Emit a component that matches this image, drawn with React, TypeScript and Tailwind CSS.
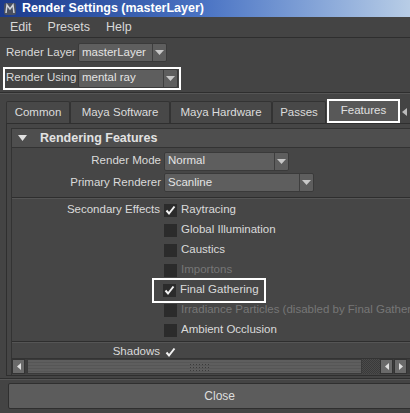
import React from "react";

const Check = () => (
  <svg viewBox="0 0 13 13" className="w-[13px] h-[13px]">
    <path d="M2.5 6.5 L5 9.5 L10.5 2.5" stroke="#f2f2f2" strokeWidth="2" fill="none" />
  </svg>
);

const Box = ({ checked }: { checked?: boolean }) => (
  <div className="w-[13px] h-[13px] bg-[#2b2b2b] flex items-center justify-center shrink-0">
    {checked && <Check />}
  </div>
);

const Arrow = () => (
  <svg viewBox="0 0 9 5" className="w-[9px] h-[5px]">
    <path d="M0 0 L9 0 L4.5 5 Z" fill="#c8c8c8" />
  </svg>
);

const Dropdown = ({ text, w }: { text: string; w: string }) => (
  <div className={`${w} h-[19px] shrink-0 bg-[#5e5e5e] rounded-[2px] border border-[#3a3a3a] flex items-center`}>
    <span className="flex-1 pl-[3px] text-[#e4e4e4] whitespace-nowrap">{text}</span>
    <div className="w-[14px] h-full border-l border-[#3e3e3e] flex items-center justify-center">
      <Arrow />
    </div>
  </div>
);

const effects = [
  { label: "Raytracing", checked: true },
  { label: "Global Illumination" },
  { label: "Caustics" },
  { label: "Importons", disabled: true },
  { label: "Final Gathering", checked: true, boxed: true },
  { label: "Irradiance Particles (disabled by Final Gathering)", disabled: true },
  { label: "Ambient Occlusion" },
];

const tabs = [
  { label: "Common", w: "w-[64px]" },
  { label: "Maya Software", w: "w-[100px]" },
  { label: "Maya Hardware", w: "w-[102px]" },
  { label: "Passes", w: "w-[54px]" },
];

const Sep = ({ cls }: { cls?: string }) => (
  <div className={`h-[2px] shrink-0 border-t border-[#2e2e2e] border-b border-b-[#555] ${cls ?? ""}`} />
);

export default function App() {
  return (
    <div className="w-[410px] h-[413px] bg-[#444444] overflow-hidden flex flex-col font-['Liberation_Sans',Arial,sans-serif] text-[11.5px] text-[#dadada] leading-none">
      {/* title bar */}
      <div className="h-[17px] shrink-0 flex items-center gap-[5px] pl-[3px] bg-gradient-to-r from-[#1b3a8c] via-[#4b74c4] to-[#b8cde6]">
        <svg viewBox="0 0 14 14" className="w-[14px] h-[14px]">
          <rect x="1" y="1" width="12" height="12" rx="2" fill="#4a5060" />
          <path d="M3 11 L4 3 L7 7 L10 3 L11 11" stroke="#d0d4dc" strokeWidth="1.5" fill="none" />
        </svg>
        <span className="text-white font-bold text-[12.5px] whitespace-nowrap">Render Settings (masterLayer)</span>
      </div>

      <div className="flex-1 flex">
        <div className="w-[2px] bg-[#cfcfcf]" />
        <div className="flex-1 flex flex-col">
          {/* menu */}
          <div className="h-[21px] shrink-0 flex items-center gap-[16px] pl-[10px] text-[12.5px] text-[#d8d8d8] border-b border-[#2e2e2e]">
            <span>Edit</span>
            <span>Presets</span>
            <span>Help</span>
          </div>

          <div className="h-[26px] shrink-0 flex items-center pl-[6px] gap-[3px] pt-[3px]">
            <span className="w-[69px] whitespace-nowrap">Render Layer</span>
            <Dropdown text="masterLayer" w="w-[89px]" />
          </div>
          <div className="h-[28px] shrink-0 flex items-center pl-[3px]">
            <div className="h-[23px] w-[178px] border-2 border-white flex items-center pl-[1px] gap-[3px]">
              <span className="w-[69px] whitespace-nowrap">Render Using</span>
              <Dropdown text="mental ray" w="w-[100px]" />
            </div>
          </div>
          <Sep />

          {/* tabs */}
          <div className="h-[7px] shrink-0" />
          <div className="h-[22px] shrink-0 flex items-end pl-[6px]">
            {tabs.map((t) => (
              <div
                key={t.label}
                className={`${t.w} h-[22px] bg-[#484848] border border-[#333] border-b-0 rounded-t-[2px] flex items-center justify-center text-[#dcdcdc] whitespace-nowrap`}
              >
                {t.label}
              </div>
            ))}
            <div className="ml-[1px] w-[73px] h-[24px] border-2 border-white flex items-center justify-center">
              <div className="w-full h-full bg-[#585858] flex items-center justify-center text-[#e0e0e0]">Features</div>
            </div>
            <div className="ml-[2px] self-center">
              <svg viewBox="0 0 5 8" className="w-[5px] h-[8px]">
                <path d="M5 0 L0 4 L5 8 Z" fill="#bbb" />
              </svg>
            </div>
          </div>

          {/* panel */}
          <div className="h-[253px] shrink-0 ml-[6px] border border-[#2f2f2f] bg-[#464646] flex flex-col pl-[4px] pt-[4px]">
            <div className="flex-1 border-l border-t border-[#333] flex flex-col overflow-hidden">
              <div className="h-[19px] shrink-0 bg-[#4e4e4e] border-b border-[#333] flex items-center pl-[6px] gap-[13px]">
                <svg viewBox="0 0 9 6" className="w-[9px] h-[6px]">
                  <path d="M0 0 L9 0 L4.5 6 Z" fill="#e0e0e0" />
                </svg>
                <span className="font-bold text-[12.5px] text-[#e2e2e2]">Rendering Features</span>
              </div>

              <div className="flex items-center h-[22px] shrink-0 mt-[2px]">
                <span className="w-[152px] text-right pr-[3px] whitespace-nowrap">Render Mode</span>
                <Dropdown text="Normal" w="w-[125px]" />
              </div>
              <div className="flex items-center h-[21px] shrink-0">
                <span className="w-[152px] text-right pr-[3px] whitespace-nowrap">Primary Renderer</span>
                <Dropdown text="Scanline" w="w-[150px]" />
              </div>
              <Sep cls="mt-[4px]" />

              <div className="flex flex-col pt-[1px]">
                {effects.map((e, i) => (
                  <div key={e.label} className="h-[20px] shrink-0 flex items-center">
                    <span className="w-[152px] shrink-0 text-right pr-[4px] whitespace-nowrap">{i === 0 ? "Secondary Effects" : ""}</span>
                    {e.boxed ? (
                      <div className="-ml-[12px] h-[25px] w-[114px] shrink-0 border-2 border-white flex items-center pl-[9px] gap-[4px]">
                        <Box checked={e.checked} />
                        <span className="whitespace-nowrap">{e.label}</span>
                      </div>
                    ) : (
                      <div className="flex items-center gap-[4px]">
                        <Box checked={e.checked} />
                        <span className={`whitespace-nowrap ${e.disabled ? "text-[#767676]" : ""}`}>{e.label}</span>
                      </div>
                    )}
                  </div>
                ))}
              </div>
              <Sep cls="mt-[1px]" />
              <div className="h-[15px] shrink-0 flex items-end overflow-hidden">
                <span className="w-[152px] text-right pr-[4px] whitespace-nowrap pb-[1px]">Shadows</span>
                <div className="w-[13px] h-[12px] overflow-hidden flex items-start justify-center">
                  <Check />
                </div>
              </div>
              {/* scrollbar */}
              <div className="h-[16px] shrink-0 flex items-stretch bg-[#3c3c3c] border-t border-[#333]">
                <div className="w-[13px] bg-[#6a6a6a] flex items-center justify-center border border-[#333]">
                  <svg viewBox="0 0 4 7" className="w-[4px] h-[7px]">
                    <path d="M4 0 L0 3.5 L4 7 Z" fill="#e0e0e0" />
                  </svg>
                </div>
                <div className="w-[335px] ml-[2px] bg-[repeating-linear-gradient(to_bottom,#5e5e5e_0px,#5e5e5e_2px,#565656_2px,#565656_3px)] border border-[#3a3a3a] flex items-center justify-center">
                  <div className="w-[20px] h-[8px] bg-[radial-gradient(circle,#3a3a3a_1px,transparent_1px)] bg-[length:3px_3px] ml-[8px]" />
                </div>
                <div className="w-[18px] bg-[repeating-conic-gradient(#3a3a3a_0%_25%,#4a4a4a_0%_50%)] bg-[length:2px_2px]" />
                <div className="w-[13px] bg-[#6a6a6a] flex items-center justify-center border border-[#333]">
                  <svg viewBox="0 0 4 7" className="w-[4px] h-[7px]">
                    <path d="M4 0 L0 3.5 L4 7 Z" fill="#e0e0e0" />
                  </svg>
                </div>
                <div className="w-[13px] ml-[1px] bg-[#6a6a6a] flex items-center justify-center border border-[#333]">
                  <svg viewBox="0 0 4 7" className="w-[4px] h-[7px]">
                    <path d="M0 0 L4 3.5 L0 7 Z" fill="#e0e0e0" />
                  </svg>
                </div>
              </div>
            </div>
          </div>

          <Sep cls="mt-[2px]" />
          <div className="h-[26px] shrink-0 mt-[3px] ml-[8px] bg-[#5c5c5c] border border-[#2f2f2f] rounded-[2px] flex items-center justify-center text-[#dedede] text-[12px]">
            Close
          </div>
          <div className="flex-1" />
        </div>
      </div>
    </div>
  );
}
